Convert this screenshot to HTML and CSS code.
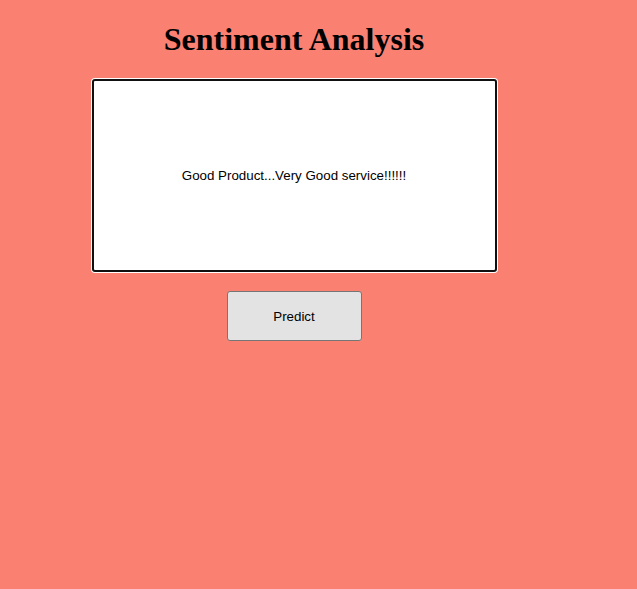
FILE: index.html
```html
<!DOCTYPE html>
<html>
<head>
<meta charset="utf-8">
<link rel="stylesheet" href="styles.css">
</head>
<body>
<main class="page">
  <h1 class="title">Sentiment Analysis</h1>
  <div class="input-box">Good Product...Very Good service!!!!!!</div>
  <button class="predict">Predict</button>
</main>
</body>
</html>
```
FILE: styles.css
```css
html, body {
  background: #fa8072;
}
body {
  margin: 8px;
}
.page {
  width: 572px;
  display: flex;
  flex-direction: column;
  align-items: center;
}
.title {
  font-family: "Liberation Serif", "Times New Roman", serif;
  font-size: 32px;
  font-weight: bold;
  margin: 13px 0 21px;
  line-height: 37px;
  color: #000;
}
.input-box {
  box-sizing: border-box;
  width: 405px;
  height: 193px;
  background: #fff;
  border: 2px solid #101010;
  border-radius: 3px;
  box-shadow: 0 0 0 1px #fff;
  display: flex;
  align-items: center;
  justify-content: center;
  font-family: "Liberation Sans", Arial, sans-serif;
  font-size: 13.333px;
  color: #000;
}
.predict {
  box-sizing: border-box;
  margin-top: 19px;
  width: 135px;
  height: 50px;
  background: #e3e3e3;
  border: 1px solid #767676;
  border-radius: 3px;
  font-family: "Liberation Sans", Arial, sans-serif;
  font-size: 13.333px;
  color: #000;
  padding: 0;
}
```
